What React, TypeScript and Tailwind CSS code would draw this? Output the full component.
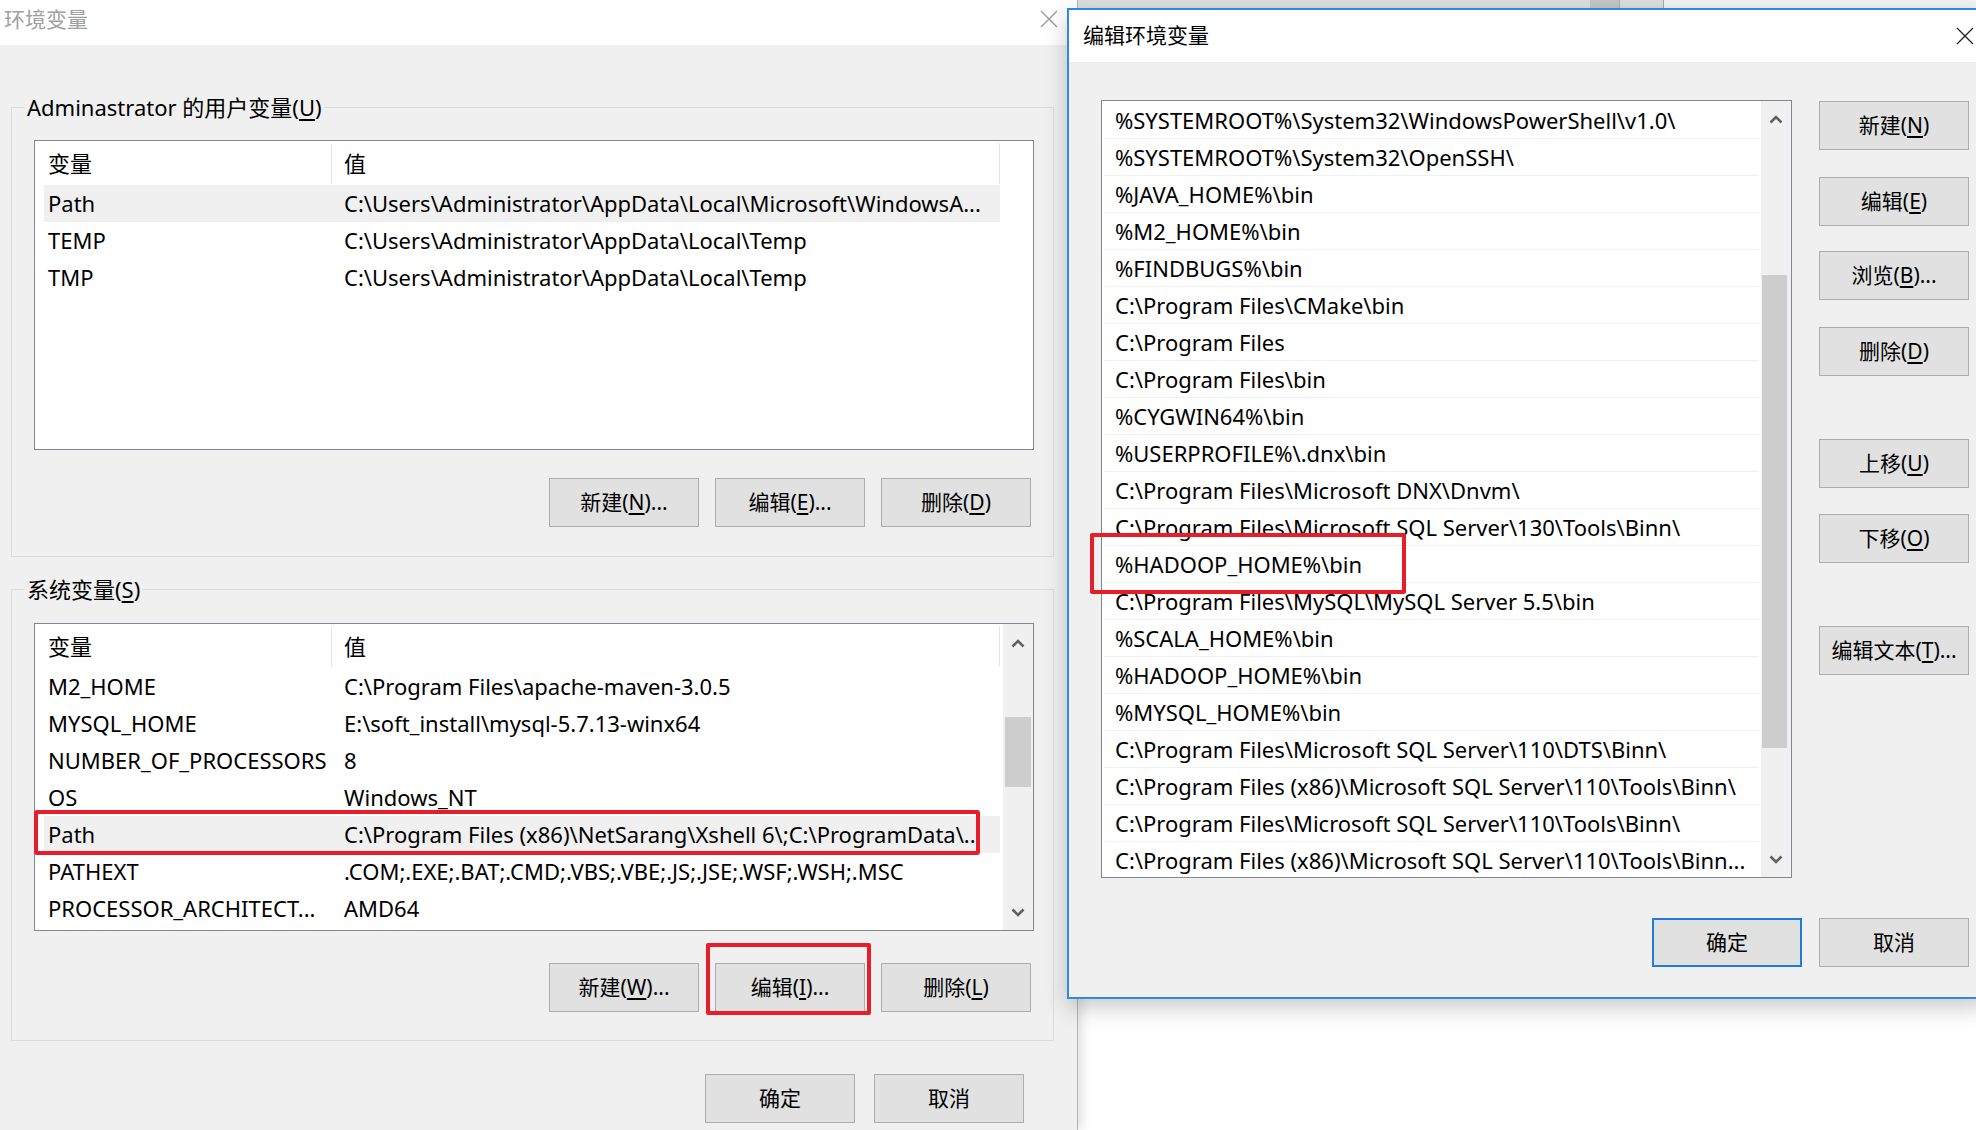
import React from "react";

const userVars = [
  ["Path", "C:\\Users\\Administrator\\AppData\\Local\\Microsoft\\WindowsA..."],
  ["TEMP", "C:\\Users\\Administrator\\AppData\\Local\\Temp"],
  ["TMP", "C:\\Users\\Administrator\\AppData\\Local\\Temp"],
];

const sysVars = [
  ["M2_HOME", "C:\\Program Files\\apache-maven-3.0.5"],
  ["MYSQL_HOME", "E:\\soft_install\\mysql-5.7.13-winx64"],
  ["NUMBER_OF_PROCESSORS", "8"],
  ["OS", "Windows_NT"],
  ["Path", "C:\\Program Files (x86)\\NetSarang\\Xshell 6\\;C:\\ProgramData\\.."],
  ["PATHEXT", ".COM;.EXE;.BAT;.CMD;.VBS;.VBE;.JS;.JSE;.WSF;.WSH;.MSC"],
  ["PROCESSOR_ARCHITECT...", "AMD64"],
];

const paths = [
  "%SYSTEMROOT%\\System32\\WindowsPowerShell\\v1.0\\",
  "%SYSTEMROOT%\\System32\\OpenSSH\\",
  "%JAVA_HOME%\\bin",
  "%M2_HOME%\\bin",
  "%FINDBUGS%\\bin",
  "C:\\Program Files\\CMake\\bin",
  "C:\\Program Files",
  "C:\\Program Files\\bin",
  "%CYGWIN64%\\bin",
  "%USERPROFILE%\\.dnx\\bin",
  "C:\\Program Files\\Microsoft DNX\\Dnvm\\",
  "C:\\Program Files\\Microsoft SQL Server\\130\\Tools\\Binn\\",
  "%HADOOP_HOME%\\bin",
  "C:\\Program Files\\MySQL\\MySQL Server 5.5\\bin",
  "%SCALA_HOME%\\bin",
  "%HADOOP_HOME%\\bin",
  "%MYSQL_HOME%\\bin",
  "C:\\Program Files\\Microsoft SQL Server\\110\\DTS\\Binn\\",
  "C:\\Program Files (x86)\\Microsoft SQL Server\\110\\Tools\\Binn\\",
  "C:\\Program Files\\Microsoft SQL Server\\110\\Tools\\Binn\\",
  "C:\\Program Files (x86)\\Microsoft SQL Server\\110\\Tools\\Binn...",
];

function Chevron({ up }: { up?: boolean }) {
  return (
    <svg width="14" height="9" viewBox="0 0 14 9">
      <path
        d={up ? "M1.5 7.5 L7 2 L12.5 7.5" : "M1.5 1.5 L7 7 L12.5 1.5"}
        fill="none"
        stroke="#606060"
        strokeWidth="2.6"
      />
    </svg>
  );
}

function CloseX({ color }: { color: string }) {
  return (
    <svg width="18" height="18" viewBox="0 0 18 18">
      <path d="M1 1 L17 17 M17 1 L1 17" stroke={color} strokeWidth="1.3" />
    </svg>
  );
}

function Key({ k }: { k: string }) {
  return <span className="underline underline-offset-[3px]">{k}</span>;
}

function Btn({
  children,
  focused,
  className = "",
}: {
  children: React.ReactNode;
  focused?: boolean;
  className?: string;
}) {
  return (
    <div
      className={`flex h-[49px] w-[150px] shrink-0 items-center justify-center bg-[#e1e1e1] text-[21px] ${
        focused ? "border-2 border-[#1e7fd8]" : "border border-[#adadad]"
      } ${className}`}
    >
      {children}
    </div>
  );
}

function VarTable({
  rows,
  selected,
  scroll,
  height,
}: {
  rows: string[][];
  selected: number;
  scroll?: boolean;
  height: string;
}) {
  return (
    <div className={`flex w-[1000px] border border-[#828790] bg-white ${height}`}>
      <div className="flex-1 overflow-hidden">
        {/* Header */}
        <div className="flex h-[44px] items-center">
          <div className="flex h-[41px] w-[297px] items-center border-r border-[#e5e5e5] pl-[13px]">
            变量
          </div>
          <div className="flex h-[41px] w-[668px] items-center border-r border-[#e5e5e5] pl-[12px]">
            值
          </div>
        </div>
        {rows.map(([name, value], i) => (
          <div
            key={name}
            className={`ml-[9px] flex h-[37px] w-[956px] items-center whitespace-nowrap ${
              i === selected ? "bg-[#f0f0f0]" : ""
            }`}
          >
            <div className="w-[288px] overflow-hidden pl-[4px]">{name}</div>
            <div className="flex-1 overflow-hidden pl-[12px]">{value}</div>
          </div>
        ))}
      </div>
      {scroll && (
        <div className="flex w-[30px] flex-col bg-[#f0f0f0]">
          <div className="flex h-[38px] items-center justify-center">
            <Chevron up />
          </div>
          <div className="flex-1">
            <div className="mx-auto mt-[55px] h-[70px] w-[26px] bg-[#cdcdcd]" />
          </div>
          <div className="flex h-[36px] items-center justify-center">
            <Chevron />
          </div>
        </div>
      )}
    </div>
  );
}

function GroupBox({
  label,
  children,
  className = "",
}: {
  label: React.ReactNode;
  children: React.ReactNode;
  className?: string;
}) {
  return (
    <div className={`relative ml-[11px] w-[1043px] border border-[#dcdcdc] ${className}`}>
      <span className="absolute left-[13px] top-[-16px] bg-[#f0f0f0] px-[2px] leading-[30px]">
        {label}
      </span>
      {children}
    </div>
  );
}

function EnvWindow() {
  return (
    <div className="absolute left-0 top-0 flex h-[1130px] w-[1078px] flex-col border-r border-[#b4b4b4] shadow-[4px_0_10px_rgba(0,0,0,0.12)]">
      <div className="flex h-[45px] items-start justify-between bg-white">
        <span className="ml-[4px] mt-[4px] text-[21px] leading-[30px] text-[#a0a0a0]">环境变量</span>
        <div className="mr-[19px] mt-[10px]">
          <CloseX color="#9a9a9a" />
        </div>
      </div>
      <div className="flex flex-1 flex-col bg-[#f0f0f0]">
        <GroupBox
          label={
            <>
              Adminastrator 的用户变量(<Key k="U" />)
            </>
          }
          className="mt-[62px] h-[450px] pl-[22px] pt-[32px]"
        >
          <VarTable rows={userVars} selected={0} height="h-[310px]" />
          <div className="mr-[22px] mt-[28px] flex justify-end gap-[16px]">
            <Btn>
              新建(<Key k="N" />)...
            </Btn>
            <Btn>
              编辑(<Key k="E" />)...
            </Btn>
            <Btn>
              删除(<Key k="D" />)
            </Btn>
          </div>
        </GroupBox>

        <GroupBox
          label={
            <>
              系统变量(<Key k="S" />)
            </>
          }
          className="mt-[32px] h-[452px] pl-[22px] pt-[33px]"
        >
          <div className="relative w-[1000px]">
            <VarTable rows={sysVars} selected={4} scroll height="h-[308px]" />
            <div className="absolute left-0 top-[187px] h-[45px] w-[946px] rounded-[3px] border-4 border-[#e81d2a]" />
          </div>
          <div className="mr-[22px] mt-[32px] flex justify-end gap-[16px]">
            <Btn className="h-[48px]">
              新建(<Key k="W" />)...
            </Btn>
            <div className="relative">
              <Btn className="h-[48px]">
                编辑(<Key k="I" />)...
              </Btn>
              <div className="absolute left-[-9px] top-[-20px] h-[72px] w-[165px] rounded-[2px] border-4 border-[#e81d2a]" />
            </div>
            <Btn className="h-[48px]">
              删除(<Key k="L" />)
            </Btn>
          </div>
        </GroupBox>

        <div className="ml-[705px] mt-[33px] flex gap-[19px]">
          <Btn className="h-[48px]">确定</Btn>
          <Btn className="h-[48px]">取消</Btn>
        </div>
      </div>
    </div>
  );
}

function EditWindow() {
  const rightButtons: [React.ReactNode, string][] = [
    [<>新建(<Key k="N" />)</>, "mt-[1px]"],
    [<>编辑(<Key k="E" />)</>, "mt-[27px]"],
    [<>浏览(<Key k="B" />)...</>, "mt-[25px]"],
    [<>删除(<Key k="D" />)</>, "mt-[27px]"],
    [<>上移(<Key k="U" />)</>, "mt-[63px]"],
    [<>下移(<Key k="O" />)</>, "mt-[26px]"],
    [<>编辑文本(<Key k="T" />)...</>, "mt-[63px]"],
  ];

  return (
    <div className="absolute left-[1067px] top-[8px] flex h-[991px] w-[920px] flex-col border-2 border-[#2b8be0] bg-[#f0f0f0] shadow-[0_8px_22px_rgba(0,0,0,0.22)]">
      <div className="flex h-[52px] items-center justify-between bg-white">
        <span className="ml-[14px] text-[21px]">编辑环境变量</span>
        <div className="mr-[11px]">
          <CloseX color="#222222" />
        </div>
      </div>
      <div className="flex pl-[32px] pt-[38px]">
        <div className="relative">
          <div className="flex h-[778px] w-[691px] border border-[#828790] bg-white">
            <div className="flex-1 overflow-hidden px-[2px] pt-[1px]">
              {paths.map((p, i) => (
                <div
                  key={i}
                  className="flex h-[37px] items-center whitespace-nowrap border-b border-[#f0f0f0] pl-[11px]"
                >
                  {p}
                </div>
              ))}
            </div>
            <div className="flex w-[30px] flex-col bg-[#f0f0f0]">
              <div className="flex h-[36px] items-center justify-center">
                <Chevron up />
              </div>
              <div className="flex-1">
                <div className="ml-[1px] mt-[138px] h-[473px] w-[25px] bg-[#cdcdcd]" />
              </div>
              <div className="flex h-[36px] items-center justify-center">
                <Chevron />
              </div>
            </div>
          </div>
          <div className="absolute left-[-11px] top-[433px] h-[61px] w-[316px] rounded-[2px] border-4 border-[#e81d2a]" />
        </div>
        <div className="ml-[27px] flex flex-col">
          {rightButtons.map(([label, mt], i) => (
            <Btn key={i} className={`h-[48px] ${mt}`}>
              {label}
            </Btn>
          ))}
        </div>
      </div>
      <div className="ml-[583px] mt-[40px] flex gap-[17px]">
        <Btn focused>确定</Btn>
        <Btn>取消</Btn>
      </div>
    </div>
  );
}

export default function App() {
  return (
    <div className="relative h-[1130px] w-[1976px] overflow-hidden bg-white font-['Noto_Sans','Noto_Sans_CJK_SC',sans-serif] text-[22px] text-black">
      <EnvWindow />
      {/* strip of the window behind, above the edit dialog */}
      <div className="absolute left-[1078px] top-0 flex h-[9px] w-[898px]">
        <div className="w-[512px] bg-[#dedede]" />
        <div className="w-[29px] bg-[#c6c6c6]" />
        <div className="w-[44px] border-l border-[#b0b0b0] bg-[#dedede]" />
        <div className="flex-1 border-l border-[#a8a8a8] bg-[#f4f4f4]" />
      </div>
      <EditWindow />
    </div>
  );
}
